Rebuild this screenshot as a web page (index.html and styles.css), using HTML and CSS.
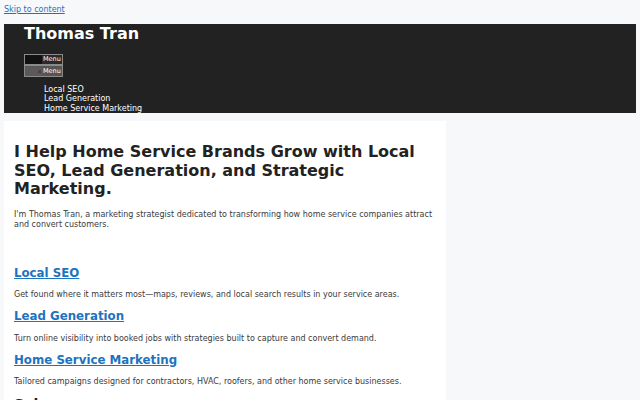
FILE: index.html
```html
<!DOCTYPE html>
<html lang="en">
<head>
<meta charset="utf-8">
<title>Thomas Tran</title>
<link rel="stylesheet" href="styles.css">
</head>
<body>
<a class="skip-link" href="#content">Skip to content</a>
<header class="site-header">
  <div class="site-title">Thomas Tran</div>
  <div class="toggles">
    <button class="menu-toggle"><span class="ico ico-open"></span><span class="lbl">Menu</span></button>
    <button class="menu-toggle alt"><span class="ico ico-close">✕</span><span class="lbl">Menu</span></button>
  </div>
  <ul class="nav">
    <li>Local SEO</li>
    <li>Lead Generation</li>
    <li>Home Service Marketing</li>
  </ul>
</header>
<div class="site">
  <main class="content" id="content">
    <h1 class="hero-title">I Help Home Service Brands Grow with Local SEO, Lead Generation, and Strategic Marketing.</h1>
    <p class="intro">I'm Thomas Tran, a marketing strategist dedicated to transforming how home service companies attract and convert customers.</p>
    <section class="service">
      <h2><a href="#">Local SEO</a></h2>
      <p>Get found where it matters most—maps, reviews, and local search results in your service areas.</p>
    </section>
    <section class="service">
      <h2><a href="#">Lead Generation</a></h2>
      <p>Turn online visibility into booked jobs with strategies built to capture and convert demand.</p>
    </section>
    <section class="service">
      <h2><a href="#">Home Service Marketing</a></h2>
      <p>Tailored campaigns designed for contractors, HVAC, roofers, and other home service businesses.</p>
    </section>
    <h2 class="next">Sales</h2>
  </main>
  <aside class="sidebar"></aside>
</div>
</body>
</html>
```

FILE: styles.css
```css
* { box-sizing: border-box; }
html, body { margin: 0; padding: 0; }
body {
  background: #f7f8f9;
  font-family: "DejaVu Sans", sans-serif;
  color: #222;
  padding: 3px 4px 0;
}
.skip-link {
  display: block;
  font-size: 8px;
  line-height: 10px;
  margin-top: 2px;
  color: #1e73be;
  text-decoration: underline;
}
.site-header {
  margin-top: 9px;
  background: #222222;
  color: #fff;
  padding: 0 20px 1px;
  height: 89px;
}
.site-title {
  font-size: 16px;
  font-weight: bold;
  line-height: 19px;
  color: #fff;
}
.toggles {
  margin-top: 11px;
  display: flex;
  flex-direction: column;
  align-items: flex-start;
}
.menu-toggle {
  display: flex;
  align-items: center;
  width: 39px;
  height: 11px;
  padding: 0;
  margin: 0;
  border: 1px solid #8a8a8a;
  background: #2a2a2a;
  color: #fff;
  font-family: "DejaVu Sans", sans-serif;
  font-size: 6.5px;
  line-height: 9px;
}
.menu-toggle.alt {
  background: #555;
  height: 12px;
}
.ico {
  width: 17px;
  height: 9px;
  display: block;
  font-size: 6px;
  line-height: 9px;
  text-align: right;
}
.ico-open { background: #111; }
.ico-close { background: #5a5a5a; color: #333; }
.lbl { padding-left: 1px; }
.nav {
  list-style: none;
  margin: 8px 0 0;
  padding: 0 0 0 20px;
  font-size: 8px;
  line-height: 9.3px;
}
.site {
  display: flex;
  margin-top: 8px;
}
.content {
  width: 442px;
  background: #fff;
  padding: 22px 10px 0;
  height: 290px;
}
.sidebar { flex: 1; }
.hero-title {
  margin: 0;
  font-size: 16px;
  line-height: 18.5px;
  font-weight: bold;
  color: #222;
}
.intro {
  margin: 11px 0 0;
  font-size: 8px;
  line-height: 10px;
  color: #3a3a3a;
}
.intro + .service { margin-top: 36px; }
.service h2 {
  margin: 0;
  font-size: 11.8px;
  line-height: 15.5px;
  font-weight: bold;
}
.service h2 a { color: #1e73be; text-decoration: underline; }
.service p {
  margin: 9px 0 9px;
  font-size: 8px;
  line-height: 10px;
  color: #3a3a3a;
}
.next {
  margin: 6px 0 0;
  font-size: 14px;
  line-height: 16px;
  font-weight: bold;
}
```
